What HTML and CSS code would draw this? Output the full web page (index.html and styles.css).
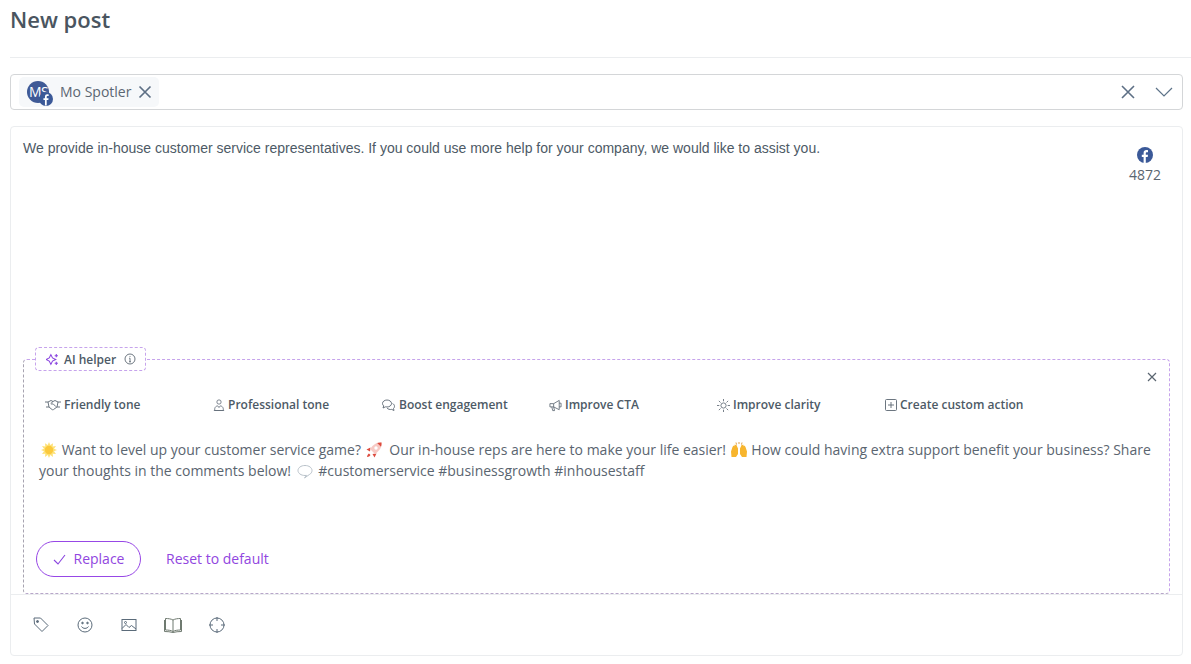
FILE: index.html
```html
<!DOCTYPE html>
<html lang="en">
<head>
<meta charset="utf-8">
<title>New post</title>
<link rel="stylesheet" href="styles.css">
</head>
<body>
<main class="page">
  <h1 class="title">New post</h1>
  <div class="select">
    <div class="chip">
      <span class="avatar">MS
        <svg class="avatar-fb" viewBox="0 0 12 12"><circle cx="6" cy="6" r="6" fill="#3b5998"/><path d="M6.600 11.500V6.900h1.400l.2-1.600H6.600v-1c0-.5.2-.8.8-.8h.9V2.100c-.3 0-.7-.1-1.200-.1-1.200 0-2 .7-2 2.100v1.200H3.800v1.600h1.300v4.600z" fill="#fff"/></svg>
      </span>
      <span class="chip-name">Mo Spotler</span>
      <svg class="chip-x" viewBox="0 0 14 14"><path d="M1.500 1.500l11 11M12.500 1.500l-11 11"/></svg>
    </div>
    <div class="select-controls">
      <svg class="ctl-x" viewBox="0 0 14 14"><path d="M1 1l12 12M13 1L1 13"/></svg>
      <svg class="ctl-chev" viewBox="0 0 18 10"><path d="M1 1l8 8 8-8"/></svg>
    </div>
  </div>
  <section class="editor">
    <div class="compose">
      <p class="compose-text">We provide in-house customer service representatives. If you could use more help for your company, we would like to assist you.</p>
      <div class="counter">
        <svg class="counter-fb" viewBox="0 0 16 16"><circle cx="8" cy="8" r="8" fill="#3b5998"/><path d="M8.800 16V9.900h1.900l.3-2.200H8.800V6.300c0-.7.2-1.100 1.100-1.100H11V3.200c-.3 0-.9-.1-1.600-.1-1.600 0-2.800 1-2.800 2.800v1.800H4.800v2.200h1.800V16z" fill="#fff"/></svg>
        <span>4872</span>
      </div>
    </div>
    <div class="ai">
      <div class="ai-badge">
        <svg class="ai-spark" viewBox="0 0 12 12"><path d="M4.500 2.500l1.500 3 3 1.500-3 1.500-1.500 3-1.500-3-3-1.500 3-1.500z" transform="translate(0 -1)"/><path d="M9.500 1v3M8 2.500h3M9.500 8v3M8 9.500h3"/></svg>
        <span>AI helper</span>
        <svg class="ai-info" viewBox="0 0 12 12"><circle cx="6" cy="6" r="5"/><path d="M6 5.200v3.600M5 8.800h2M5.200 5.200H6M6 3v.8"/></svg>
      </div>
      <svg class="ai-close" viewBox="0 0 10 10"><path d="M1 1l8 8M9 1L1 9"/></svg>
      <div class="actions">
        <div class="action">
          <svg class="action-icon icon-wide" viewBox="0 0 16 12"><path d="M0 3h3l1 5H1M16 3h-3l-1 5h3M3 3l3-1.500 2 1 2-1 3 1.500M4 8l3 2.500c.8.600 1.500.2 1.800-.2L12 8M8 2.500L5.800 4.500c.7.800 1.500.8 2.200.2l3 3"/></svg>
          <span>Friendly tone</span>
        </div>
        <div class="action">
          <svg class="action-icon" viewBox="0 0 14 14"><circle cx="7" cy="3.500" r="2.500"/><path d="M2 13.500v-2c0-2 2-3.500 3.500-3.500L7 10l1.500-2c1.500 0 3.500 1.500 3.500 3.500v2zM1 13.500h12"/></svg>
          <span>Professional tone</span>
        </div>
        <div class="action">
          <svg class="action-icon icon-chat" viewBox="0 0 14 13"><path d="M5.500 1C3 1 1 2.500 1 4.500c0 1 .5 1.800 1.200 2.400L1.500 9l2.500-1.200c.5.100 1 .2 1.500.2 2.500 0 4.500-1.500 4.500-3.500S8 1 5.500 1z"/><path d="M11 4.500c1.300.6 2 1.600 2 2.800 0 .9-.4 1.600-1 2.200l.5 2-2.300-1.100c-1.800.4-3.700-.2-4.700-1.400"/></svg>
          <span>Boost engagement</span>
        </div>
        <div class="action">
          <svg class="action-icon icon-mid" viewBox="0 0 14 14"><path d="M1 5h4l6-3.500v10L5 8.500H1zM3 8.500l1 4h2l-1-4M11 4.500h2v4h-2M5 5v3.500"/></svg>
          <span>Improve CTA</span>
        </div>
        <div class="action">
          <svg class="action-icon icon-mid" viewBox="0 0 14 14"><circle cx="7" cy="7" r="2.800"/><path d="M7 0v2.500M7 11.500V14M0 7h2.500M11.500 7H14M2 2l1.800 1.800M10.200 10.200L12 12M12 2l-1.800 1.800M3.800 10.200L2 12"/></svg>
          <span>Improve clarity</span>
        </div>
        <div class="action">
          <svg class="action-icon" viewBox="0 0 12 12"><rect x=".5" y=".5" width="11" height="11" rx="1"/><path d="M6 3v6M3 6h6"/></svg>
          <span>Create custom action</span>
        </div>
      </div>
      <p class="ai-text"><svg class="emoji" viewBox="0 0 16 16"><path fill="#fde27a" d="M8 0l1.300 3 2.700-1.800-.3 3.200 3.300-.3L13 6.700 16 8l-3 1.300 2 2.700-3.300-.3.300 3.300-2.700-2L8 16l-1.300-3-2.700 2 .3-3.300L1 12l2-2.700L0 8l3-1.300L1 4.100l3.300.3L4 1.200 6.700 3z"/><circle cx="8" cy="8" r="4.200" fill="#fbc93c"/></svg> Want to level up your customer service game? <svg class="emoji emoji-rocket" viewBox="0 0 16 16"><path fill="#dd4b3e" d="M4.500 5.500L.5 7.500l3.500 2zM10.500 11.500l-2 4-2-3.500zM1 15c0-1.500 1-3 2-3.500L4.500 13C4 14 2.500 15 1 15z"/><path fill="#f6c9c4" d="M15.500.5c.3 4.500-1.500 8-6.500 11.500L4 7C7.500 2 11 .2 15.500.5z"/><path fill="#dd4b3e" d="M15.500.5c.1 1.500 0 3-.5 4.300L11.200 1c1.300-.4 2.800-.6 4.300-.5z"/><circle cx="10" cy="6" r="1.700" fill="#fff"/></svg> Our in-house reps are here to make your life easier! <svg class="emoji emoji-hands" viewBox="0 0 16 16"><path fill="#f7b52e" d="M.5 15L0 9.500 1.500 5l1-1.500.7.800.6-1.800 1 .5.400-.5L7 6.500V12l-2 3zM15.500 15l.5-5.500L14.500 5l-1-1.500-.7.800-.6-1.800-1 .5-.4-.5L9 6.500V12l2 3z"/><path fill="none" stroke="#d98a1e" stroke-width=".8" d="M5.500 2.500L5 .5M8 2V0M10.500 2.500L11 .5"/></svg> How could having extra support benefit your business? Share your thoughts in the comments below! <svg class="emoji emoji-chat" viewBox="0 0 16 16"><path fill="#fff" stroke="#b9c2ca" d="M8 2.500c-4 0-7 2.200-7 5s3 5 7 5c.5 0 1 0 1.500-.1L7.500 15l4.800-3.400C14 10.700 15 9.200 15 7.500c0-2.800-3-5-7-5z"/></svg> #customerservice #businessgrowth #inhousestaff</p>
      <div class="ai-buttons">
        <button class="btn-replace" type="button">
          <svg class="btn-check" viewBox="0 0 13 11"><path d="M1 6l4 4 7-9"/></svg>
          <span>Replace</span>
        </button>
        <button class="btn-reset" type="button">Reset to default</button>
      </div>
    </div>
    <div class="toolbar">
      <svg class="tool" viewBox="0 0 16 16"><path d="M1 1h6.500L15 8.500l-6 6-7.500-7.500z"/><circle cx="4.500" cy="4.500" r="1" fill="#5b6b7a"/></svg>
      <svg class="tool" viewBox="0 0 16 16"><circle cx="8" cy="8" r="7"/><path d="M4.500 9.500c1.500 2.500 5.500 2.500 7 0"/><circle cx="5.500" cy="6" r=".8" fill="#5b6b7a"/><circle cx="10.500" cy="6" r=".8" fill="#5b6b7a"/></svg>
      <svg class="tool" viewBox="0 0 16 14"><rect x="1" y="1.500" width="14" height="11"/><path d="M1 10.500l4-4 3 3 2.500-2 4.500 3.500"/><circle cx="4.500" cy="4.500" r="1"/></svg>
      <svg class="tool tool-book" viewBox="0 0 18 16"><path d="M9 3C7 1.800 4 1.500 1.500 1.500v11.500c2.500 0 5.500.3 7.500 1.500 2-1.200 5-1.500 7.500-1.500V1.500C14 1.500 11 1.800 9 3zM9 3v11.500"/><path d="M.5 3v11.500c3 0 6 .3 8.500 1 2.500-.7 5.500-1 8.500-1V3"/></svg>
      <svg class="tool" viewBox="0 0 16 16"><circle cx="8" cy="8" r="7"/><path d="M8 0v4M8 12v4M0 8h4M12 8h4"/></svg>
    </div>
  </section>
</main>
</body>
</html>
```
FILE: styles.css
```css
* { box-sizing: border-box; }
html, body { margin: 0; height: 100%; }
body {
  background: #fff;
  color: #4d5a66;
  font-family: "Open Sans", sans-serif;
  overflow: hidden;
}
.page { display: flex; flex-direction: column; padding-left: 10px; }
.title {
  margin: 0;
  height: 58px;
  padding-top: 4px;
  border-bottom: 1px solid #ebedef;
  font-size: 22px;
  line-height: 30px;
  font-weight: 600;
  color: #4a5560;
}
.select {
  display: flex;
  align-items: center;
  justify-content: space-between;
  width: 1173px;
  height: 36px;
  margin-top: 16px;
  padding: 0 9px 0 8px;
  border: 1px solid #d4d6d8;
  border-radius: 4px;
}
.chip {
  display: flex;
  align-items: center;
  height: 30px;
  width: 140px;
  padding-left: 8px;
  border-radius: 5px;
  background: #f6f8fa;
}
.avatar {
  position: relative;
  display: block;
  width: 22px;
  height: 22px;
  border-radius: 50%;
  background: #3f5a96;
  color: #fff;
  font-size: 14px;
  font-weight: 400;
  line-height: 22px;
  white-space: nowrap;
  text-indent: 2px;
  letter-spacing: -.5px;
}
.avatar-fb { position: absolute; right: -4px; bottom: -3px; width: 14px; height: 14px; }
.chip-name { margin-left: 11px; font-size: 14px; line-height: 20px; color: #5b6672; }
.chip-x { width: 14px; height: 14px; margin-left: 7px; fill: none; stroke: #5d6f85; stroke-width: 1.700; }
.select-controls { display: flex; align-items: center; gap: 20px; }
.ctl-x { width: 14px; height: 14px; fill: none; stroke: #5d6f85; stroke-width: 1.600; }
.ctl-chev { width: 18px; height: 10px; fill: none; stroke: #5d7389; stroke-width: 1.200; }
.editor {
  width: 1173px;
  height: 530px;
  margin-top: 16px;
  border: 1px solid #ebedef;
  border-radius: 4px;
  display: flex;
  flex-direction: column;
}
.compose {
  display: flex;
  justify-content: space-between;
  height: 232px;
  padding: 12px 21px 0 12px;
}
.compose-text {
  margin: 0;
  font-family: "Liberation Sans", Arial, sans-serif;
  font-size: 14px;
  line-height: 19px;
  color: #4d5a66;
}
.counter {
  display: flex;
  flex-direction: column;
  align-items: center;
  gap: 2px;
  padding-top: 9px;
  font-size: 14px;
  line-height: 19px;
  color: #5a6570;
}
.counter-fb { width: 16px; height: 16px; margin-top: -1px; }
.ai {
  position: relative;
  width: 1147px;
  height: 235px;
  margin-left: 12px;
  padding: 36px 0 0 15px;
  border: 1px dashed #c6a3ec;
  border-bottom-color: #b7a6c9;
  border-left-color: #a7a3b0;
  border-radius: 4px;
}
.ai-badge {
  position: absolute;
  left: 11px;
  top: -13px;
  display: flex;
  align-items: center;
  width: 111px;
  height: 24px;
  padding-left: 10px;
  border: 1px dashed #c6a3ec;
  border-radius: 4px;
  background: #fff;
  font-size: 12px;
  font-weight: 600;
  color: #4d5a66;
}
.ai-spark { width: 13px; height: 13px; margin-right: 5px; fill: none; stroke: #8a45df; stroke-width: 1; }
.ai-info { width: 12px; height: 12px; margin-left: 8px; fill: none; stroke: #5b6672; stroke-width: .9; }
.ai-close { position: absolute; right: 12px; top: 12px; width: 10px; height: 10px; fill: none; stroke: #5a6570; stroke-width: 1.200; }
.actions {
  display: grid;
  grid-template-columns: repeat(6, 168px);
  padding-left: 6px;
}
.action {
  display: flex;
  align-items: center;
  gap: 3px;
  height: 18px;
  font-size: 12px;
  font-weight: 600;
  line-height: 18px;
  color: #4d5a66;
  white-space: nowrap;
}
.action-icon { width: 12px; height: 12px; flex: none; fill: none; stroke: #5b6672; stroke-width: .9; }
.icon-wide { width: 16px; }
.icon-chat { width: 15px; height: 13px; }
.icon-mid { width: 13px; height: 13px; }
.ai-text {
  margin: 25px 12px 0 0;
  font-size: 14px;
  line-height: 21px;
  color: #5a6570;
  height: 66px;
}
.emoji { display: inline-block; width: 16px; height: 16px; vertical-align: -3px; margin: 0 1.500px; }
.emoji-rocket { margin-right: 3.500px; }
.emoji-hands { margin: 0 1px 0 1px; }
.emoji-chat { margin: 0 2px; }
.ai-buttons { display: flex; align-items: center; gap: 25px; margin-top: 36px; margin-left: -3px; }
.btn-replace {
  display: flex;
  align-items: center;
  justify-content: center;
  gap: 8px;
  width: 105px;
  height: 36px;
  padding: 0;
  border: 1px solid #9747e6;
  border-radius: 18px;
  background: #fff;
  color: #9146e0;
  font: 14px/20px "Open Sans", sans-serif;
}
.btn-check { width: 13px; height: 11px; fill: none; stroke: #8a45df; stroke-width: 1.100; }
.btn-reset {
  padding: 0;
  border: 0;
  background: none;
  color: #9146e0;
  font: 14px/20px "Open Sans", sans-serif;
}
.toolbar {
  display: flex;
  align-items: center;
  gap: 28px;
  flex: 1;
  padding-left: 22px;
  border-top: 1px solid #ebedef;
}
.tool { width: 16px; height: 16px; flex: none; fill: none; stroke: #5b6b7a; stroke-width: 1; }
.tool-book { width: 18px; margin: 0 -1px; stroke: #6f7a70; }
```
